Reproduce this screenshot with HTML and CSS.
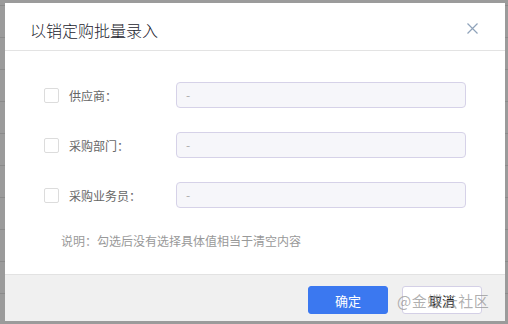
FILE: index.html
```html
<!DOCTYPE html>
<html lang="zh">
<head>
    <meta charset="UTF-8">
    <title>以销定购批量录入</title>
    <link rel="stylesheet" href="styles.css">
</head>
<body>
    <div class="backdrop"></div>

    <div class="dialog">
        <div class="dialog-header">
            <span class="dialog-title">以销定购批量录入</span>
            <svg class="close" width="11" height="11" viewBox="0 0 11 11">
                <path d="M0.5 0.5 L10.5 10.5 M10.5 0.5 L0.5 10.5" stroke="#8fa3ba" stroke-width="1.2" fill="none"/>
            </svg>
        </div>

        <div class="dialog-body">
            <div class="row">
                <span class="check"></span>
                <span class="label">供应商：</span>
                <div class="field">-</div>
            </div>
            <div class="row">
                <span class="check"></span>
                <span class="label">采购部门：</span>
                <div class="field">-</div>
            </div>
            <div class="row">
                <span class="check"></span>
                <span class="label">采购业务员：</span>
                <div class="field">-</div>
            </div>
            <p class="note">说明：勾选后没有选择具体值相当于清空内容</p>
        </div>

        <div class="dialog-footer">
            <button class="btn btn-primary">确定</button>
            <button class="btn">取消</button>
        </div>
    </div>

    <div class="watermark">@金蝶云社区</div>
</body>
</html>
```

FILE: styles.css
```css
body {
    font-family: "Noto Sans CJK SC", "Noto Sans", sans-serif;
    margin: 0;
    padding: 0;
    width: 508px;
    height: 324px;
    overflow: hidden;
    position: relative;
}

/* table behind the mask */
.backdrop {
    position: absolute;
    top: 0;
    left: 0;
    width: 100%;
    height: 100%;
    background-color: #9b9b9b;
    background-image: repeating-linear-gradient(to bottom, transparent 0, transparent 5px, #8b8b8b 5px, #8b8b8b 6px, transparent 6px, transparent 32px);
}

.dialog {
    position: absolute;
    left: 5px;
    top: 3px;
    width: 500px;
    height: 318px;
    background: #fff;
    display: flex;
    flex-direction: column;
}

.dialog-header {
    height: 47px;
    border-bottom: 1px solid #e3e3e3;
    display: flex;
    align-items: center;
    justify-content: space-between;
    padding: 0 27px 0 25px;
    box-sizing: content-box;
}

.dialog-title {
    font-size: 16px;
    font-weight: 300;
    color: #1c1c2e;
    padding-top: 6px;
}

.close {
    margin-top: 4px;
}

.dialog-body {
    flex: 1;
    padding: 31px 39px 0 40px;
}

.row {
    display: flex;
    align-items: center;
    height: 26px;
    margin-bottom: 24px;
}

.check {
    width: 13px;
    height: 13px;
    border: 1px solid #dcdcdc;
    border-radius: 2px;
    flex-shrink: 0;
    margin-left: -1px;
}

.label {
    font-size: 12px;
    color: #666;
    margin-left: 10px;
    width: 107px;
}

.field {
    flex: 1;
    height: 24px;
    line-height: 24px;
    border: 1px solid #d6d2e8;
    border-radius: 4px;
    background: #f6f6fa;
    color: #aaa;
    font-size: 12px;
    padding-left: 9px;
}

.note {
    font-size: 12px;
    color: #999;
    margin: 9px 0 0 16px;
}

.dialog-footer {
    height: 47px;
    border-top: 1px solid #e2e2e2;
    background: #f0f0f0;
    display: flex;
    justify-content: flex-end;
    align-items: flex-start;
    padding: 11px 23px 0 0;
    box-sizing: border-box;
    gap: 14px;
}

.btn {
    width: 80px;
    height: 28px;
    border: 1px solid #d4d0e6;
    border-radius: 3px;
    background: #fff;
    color: #222;
    font-family: inherit;
    font-size: 13px;
    padding: 0;
}

.btn-primary {
    background: #3b78f0;
    border-color: #3b78f0;
    color: #fff;
}

.watermark {
    position: absolute;
    left: 397px;
    top: 290px;
    font-size: 15px;
    color: rgba(150, 150, 150, 0.75);
    letter-spacing: 0.5px;
}
```
